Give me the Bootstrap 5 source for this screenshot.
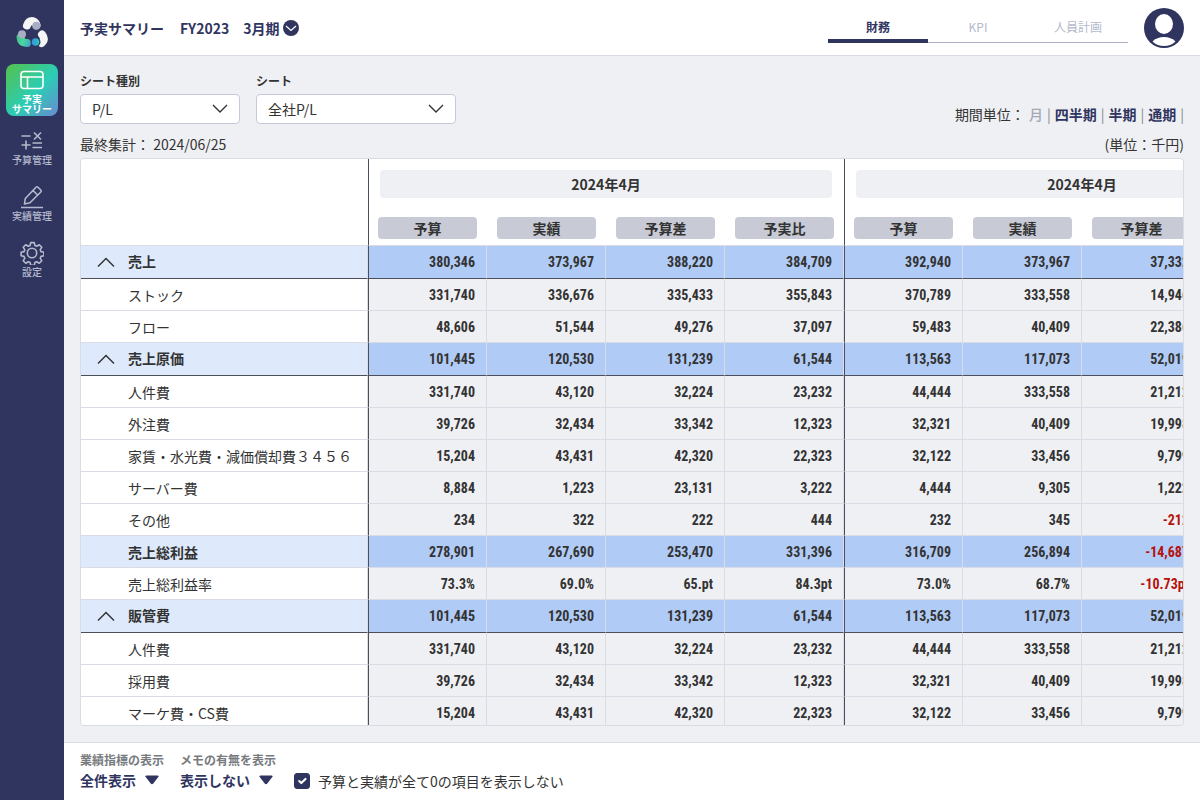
<!DOCTYPE html>
<html lang="ja">
<head>
<meta charset="utf-8">
<meta name="viewport" content="width=device-width, initial-scale=1">
<title>予実サマリー</title>
<link href="https://cdn.jsdelivr.net/npm/bootstrap@5.3.0/dist/css/bootstrap.min.css" rel="stylesheet">
<style>
:root{--navy:#30355f;--line:#d9dce5;--ink:#333;--dark:#4a4f59}
body{font-family:"Noto Sans CJK JP",sans-serif;font-size:14px;line-height:20px;color:var(--ink);background:#eff0f4}
.side{width:64px;background:var(--navy);padding:16px 6px;gap:4px}
.side-logo{height:44px}
.side-item{height:52px;border-radius:8px;color:#b4b9cd;font-size:10px;line-height:10px;font-weight:500;text-decoration:none;padding-top:9px;gap:2px}
.side-item.active{color:#fff;font-weight:700;padding-top:4px;background:linear-gradient(135deg,#55c14c 0%,#2bcdb4 55%,#6a8ad2 100%);gap:2px}
.side-item svg{flex:none}
.top{height:56px;border-bottom:1px solid var(--line);color:var(--navy)}
.fiscal{gap:14px}
.round-btn{width:16px;height:16px;border-radius:50%;background:var(--navy)}
.tabs a{width:100px;height:31px;border-bottom:1px solid #a9b0c8;font-size:12px;line-height:30px;text-align:center;text-decoration:none;color:#b4b9cb}
.tabs a.active{height:31px;border-bottom:4px solid var(--navy);color:var(--navy);font-weight:700}
.filter-label{font-size:12px;line-height:16px;font-weight:700;margin-bottom:5px}
.form-select.filter{height:30px;padding:0 32px 0 11px;font-size:14px;line-height:28px;color:var(--ink);border:1px solid #c6c9d9;border-radius:4px;
 background:#fff url("data:image/svg+xml,%3Csvg xmlns='http://www.w3.org/2000/svg' width='16' height='10' fill='none' stroke='%23333' stroke-width='1.4'%3E%3Cpath d='M1 1l7 7 7-7'/%3E%3C/svg%3E") no-repeat right 11px center/16px 10px}
.w-kind{width:160px}.w-sheet{width:200px}
.workspace{padding:17px 16px 16px}
.period a{color:var(--navy);font-weight:700;text-decoration:none}
.period a.current{color:#a3a8b8;font-weight:500}
.period i{font-style:normal;color:#888}
.summary{padding:10px 0 4px}
.sheet{border:1px solid var(--line);border-radius:4px;background:#fff;overflow:auto;scrollbar-width:none}
.sheet::-webkit-scrollbar{display:none}
.grid-table{table-layout:fixed;width:1239px;border-collapse:separate;border-spacing:0}
.grid-table col.name{width:287px}.grid-table col.num{width:119px}
.grid-table th,.grid-table td{padding:0;border-bottom:1px solid var(--line);border-right:1px solid var(--line);height:32px}
.grid-table .edge{border-left:1px solid var(--dark)}
.grid-table thead th{border-right:0;text-align:center}
.grid-table thead .month{padding:11px 12px 10px 11px;border-bottom:0}
.grid-table thead .kind{padding:9px 10px 6px;height:auto}
.grid-table thead .kind.edge{padding-left:9px}
.month span{display:block;height:28px;line-height:28px;background:#eff0f4;border-radius:4px}
.kind span{display:block;height:22px;line-height:22px;background:#c8cbd6;border-radius:4px}
.grid-table tbody th{font-weight:400;padding-left:47px;white-space:nowrap}
.grid-table tbody td{background:#eff0f4;text-align:right;padding-right:11px;font-family:"Roboto Condensed","Liberation Sans Narrow",sans-serif;font-weight:700}
.grid-table .total th{background:#deeafb;font-weight:700}
.grid-table .total td{background:#b0cbf6}
.grid-table .group th,.grid-table .group td{height:33px;border-bottom-color:var(--dark)}
.grid-table .group th{padding-left:16px}
.grid-table .neg{color:#b5120c}
.fold{width:18px;height:18px;margin-right:13px}
.foot{border-top:1px solid var(--line);padding:9px 16px;column-gap:16px;height:58px}
.foot label.cap{font-size:12px;line-height:16px;font-weight:700;color:#777b80}
.plain-select{appearance:none;border:0;padding:0 24px 0 0;height:24px;font-weight:700;font-size:14px;color:var(--navy);
 background:transparent url("data:image/svg+xml,%3Csvg xmlns='http://www.w3.org/2000/svg' width='16' height='12' fill='%2330355f'%3E%3Cpath d='M2.500 1.500h11q2 0 .8 1.500l-5 6.500q-1.300 1.500-2.600 0l-5-6.500q-1.200-1.500.8-1.500z'/%3E%3C/svg%3E") no-repeat right center/16px 12px}
.form-check-input.tick{width:16px;height:16px;margin:0;border-radius:3px}
.form-check-input.tick:checked{background-color:var(--navy);border-color:var(--navy)}
.zero-check{padding-left:2px}
</style>
</head>
<body>
<div class="d-flex vh-100">
  <nav class="side d-flex flex-column flex-shrink-0">
    <a href="#" class="side-logo d-flex justify-content-center" aria-label="ホーム">
      <svg width="32" height="32" viewBox="0 0 32 32" fill="none" stroke-linecap="round" stroke-width="8">
        <defs>
          <linearGradient id="g1" gradientUnits="userSpaceOnUse" x1="1" y1="22" x2="15" y2="28"><stop stop-color="#47c08e"/><stop offset=".45" stop-color="#4ad79c"/><stop offset="1" stop-color="#3fa4cf"/></linearGradient>
          <linearGradient id="g2" x1="0" y1="0" x2="1" y2="0"><stop stop-color="#3f8fe0"/><stop offset="1" stop-color="#22c8bd"/></linearGradient>
        </defs>
        <path d="M4.500 21.500Q5 27 11 27" stroke="url(#g1)"/>
        <circle cx="6" cy="18.300" r="4" fill="#a9adc4"/>
        <path d="M11 9.500Q12.500 5 16 5q3 0 4.500 4" stroke="#f5f5f6"/>
        <circle cx="20.300" cy="9.700" r="4" fill="#a9adc4"/>
        <path d="M26 18.500q4 5-.5 8.500" stroke="#f5f5f6"/>
        <circle cx="19.500" cy="26" r="5" fill="#30355f"/>
        <circle cx="19.500" cy="26" r="3.800" fill="url(#g2)"/>
      </svg>
    </a>
    <a href="#" class="side-item active d-flex flex-column align-items-center text-center">
      <svg width="24" height="24" viewBox="0 0 24 24" fill="none" stroke="currentColor" stroke-width="1.600"><rect x="1" y="3.500" width="22" height="17" rx="3"/><path d="M1 9h22M7.500 9v11.500"/></svg>
      <span>予実<br>サマリー</span>
    </a>
    <a href="#" class="side-item d-flex flex-column align-items-center text-center">
      <svg width="24" height="24" viewBox="0 0 24 24" fill="none" stroke="currentColor" stroke-width="1.600"><path d="M1.500 7h9M14 3.500l7 7M21 3.500l-7 7M1.500 16h9M6 11.500v9M12.500 14h9.500M12.500 18.500h9.500"/></svg>
      <span>予算管理</span>
    </a>
    <a href="#" class="side-item d-flex flex-column align-items-center text-center">
      <svg width="24" height="24" viewBox="0 0 24 24" fill="none" stroke="currentColor" stroke-width="1.600" stroke-linejoin="round"><path d="M1 22.500h22M4.500 19l.8-5.500L16 2.200q1-1 2 0L20.800 5q1 1 0 2L10 17.800zM13 5.500l4.800 4.800"/></svg>
      <span>実績管理</span>
    </a>
    <a href="#" class="side-item d-flex flex-column align-items-center text-center">
      <svg width="24" height="24" viewBox="0 0 24 24" fill="none" stroke="currentColor" stroke-width="1.600" stroke-linejoin="round"><circle cx="12" cy="12" r="4.700"/><path d="M10.200 1.500h3.600l.6 2.900 1.800.8 2.600-1.600 2.500 2.500-1.600 2.600.8 1.800 2.900.6v3.600l-2.900.6-.8 1.800 1.600 2.600-2.500 2.500-2.600-1.600-1.800.8-.6 2.900h-3.600l-.6-2.900-1.800-.8-2.600 1.600-2.500-2.500 1.600-2.600-.8-1.800-2.900-.6v-3.600l2.900-.6.8-1.800-1.600-2.600 2.500-2.500 2.600 1.600 1.800-.8z" transform="translate(.5 .1)"/></svg>
      <span>設定</span>
    </a>
  </nav>

  <div class="d-flex flex-column flex-grow-1 overflow-hidden">
    <header class="top bg-white d-flex align-items-center px-3 flex-shrink-0">
      <div class="d-flex align-items-center fw-bold me-auto">
        <span class="me-3">予実サマリー</span>
        <span class="fiscal d-flex me-1"><span>FY2023</span><span>3月期</span></span>
        <button type="button" class="round-btn border-0 p-0 d-flex" aria-label="期を選択">
          <svg width="16" height="16" viewBox="0 0 16 16" fill="none" stroke="#fff" stroke-width="1.200"><path d="M3 6l5 4.500L13 6"/></svg>
        </button>
      </div>
      <nav class="tabs d-flex me-3">
        <a href="#" class="active">財務</a><a href="#">KPI</a><a href="#">人員計画</a>
      </nav>
      <a href="#" class="d-flex" aria-label="アカウント">
        <svg width="40" height="40" viewBox="0 0 40 40"><circle cx="20" cy="20" r="20" fill="#30355f"/><ellipse cx="20" cy="16" rx="9" ry="10" fill="#fff"/><path d="M8.500 33.500c5-6 18-6 23 0-6 6-17 6-23 0z" fill="#fff"/></svg>
      </a>
    </header>

    <main class="workspace d-flex flex-column flex-grow-1 overflow-hidden">
      <div class="d-flex align-items-end gap-3">
        <div><label for="kind" class="filter-label d-block">シート種別</label>
          <select id="kind" class="form-select filter w-kind"><option>P/L</option></select></div>
        <div><label for="sheet" class="filter-label d-block">シート</label>
          <select id="sheet" class="form-select filter w-sheet"><option>全社P/L</option></select></div>
        <div class="period d-flex ms-auto"><span class="me-1">期間単位：</span>
          <a href="#" class="current">月</a><i class="px-1">|</i><a href="#">四半期</a><i class="px-1">|</i><a href="#">半期</a><i class="px-1">|</i><a href="#">通期</a><i class="ps-1">|</i></div>
      </div>
      <div class="summary d-flex justify-content-between"><span>最終集計： 2024/06/25</span><span>(単位：千円)</span></div>
      <div class="sheet flex-grow-1">
        <table class="grid-table">
          <colgroup><col class="name"><col class="num" span="8"></colgroup>
          <thead>
            <tr><th rowspan="2"></th><th class="month edge" colspan="4"><span>2024年4月</span></th><th class="month edge" colspan="4"><span>2024年4月</span></th></tr>
            <tr><th class="kind edge"><span>予算</span></th><th class="kind"><span>実績</span></th><th class="kind"><span>予算差</span></th><th class="kind"><span>予実比</span></th><th class="kind edge"><span>予算</span></th><th class="kind"><span>実績</span></th><th class="kind"><span>予算差</span></th><th class="kind"><span>予実比</span></th></tr>
          </thead>
          <tbody id="rows"></tbody>
        </table>
      </div>
    </main>

    <footer class="foot bg-white d-flex flex-shrink-0">
      <div><label class="cap d-block" for="metric">業績指標の表示</label><select id="metric" class="plain-select"><option>全件表示</option></select></div>
      <div><label class="cap d-block" for="memo">メモの有無を表示</label><select id="memo" class="plain-select"><option>表示しない</option></select></div>
      <div class="zero-check d-flex align-items-center align-self-end gap-2"><input class="form-check-input tick" type="checkbox" id="zero" checked><label for="zero">予算と実績が全て0の項目を表示しない</label></div>
    </footer>
  </div>
</div>
<script src="https://cdn.jsdelivr.net/npm/bootstrap@5.3.0/dist/js/bootstrap.bundle.min.js"></script>
<script>
// row type | account name | eight values, two months of four columns
const data = `
group|売上|380,346 373,967 388,220 384,709 392,940 373,967 37,332 384,709
|ストック|331,740 336,676 335,433 355,843 370,789 333,558 14,946 355,843
|フロー|48,606 51,544 49,276 37,097 59,483 40,409 22,386 37,097
group|売上原価|101,445 120,530 131,239 61,544 113,563 117,073 52,019 61,544
|人件費|331,740 43,120 32,224 23,232 44,444 333,558 21,212 23,232
|外注費|39,726 32,434 33,342 12,323 32,321 40,409 19,998 12,323
|家賃・水光費・減価償却費３４５６|15,204 43,431 42,320 22,323 32,122 33,456 9,799 22,323
|サーバー費|8,884 1,223 23,131 3,222 4,444 9,305 1,222 3,222
|その他|234 322 222 444 232 345 -212 444
total|売上総利益|278,901 267,690 253,470 331,396 316,709 256,894 -14,687 331,396
|売上総利益率|73.3% 69.0% 65.pt 84.3pt 73.0% 68.7% -10.73pt 84.3pt
group|販管費|101,445 120,530 131,239 61,544 113,563 117,073 52,019 61,544
|人件費|331,740 43,120 32,224 23,232 44,444 333,558 21,212 23,232
|採用費|39,726 32,434 33,342 12,323 32,321 40,409 19,998 12,323
|マーケ費・CS費|15,204 43,431 42,320 22,323 32,122 33,456 9,799 22,323`.trim().split('\n');
const fold = '<button type="button" class="fold btn p-0 border-0 d-inline-flex align-middle" aria-label="折りたたむ"><svg width="18" height="18" viewBox="0 0 18 18" fill="none" stroke="#333" stroke-width="1.500"><path d="M1 11.500l8-8 8 8"/></svg></button>';
document.getElementById('rows').innerHTML = data.map(line => {
  const [type, name, values] = line.split('|');
  const cells = values.split(' ').map((v, i) =>
    `<td class="${i % 4 ? '' : 'edge'}${v[0] === '-' ? ' neg' : ''}">${v}</td>`).join('');
  return `<tr class="${type === 'group' ? 'group total' : type}"><th scope="row">${type === 'group' ? fold : ''}${name}</th>${cells}</tr>`;
}).join('');
</script>
</body>
</html>
